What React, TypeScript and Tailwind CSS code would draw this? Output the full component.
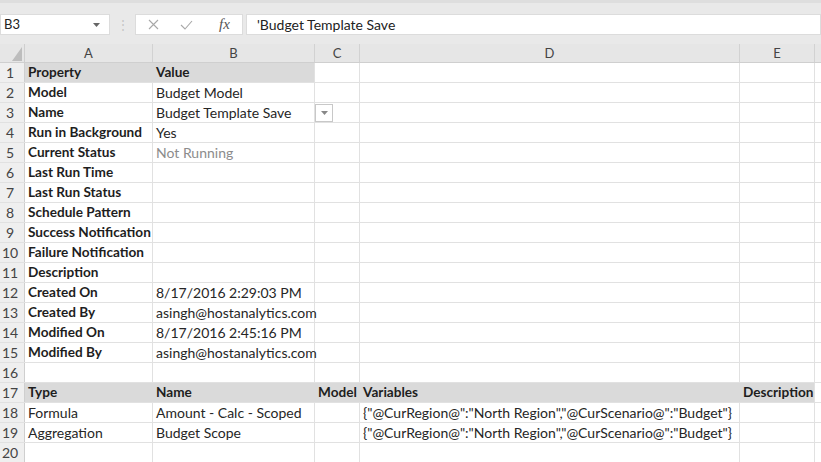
import { ReactNode } from "react";

/**
 * Excel-style sheet view: formula bar, column headers and a property list
 */

type Cell = { text?: string; bold?: boolean; muted?: boolean };
type Row = { cells: Cell[]; fill?: number; dropdown?: boolean };

const VARS = '{"@CurRegion@":"North Region","@CurScenario@":"Budget"}';

const b = (text: string): Cell => ({ text, bold: true });
const t = (text: string): Cell => ({ text });

const rows: Row[] = [
  { cells: [b("Property"), b("Value")], fill: 2 },
  { cells: [b("Model"), t("Budget Model")] },
  { cells: [b("Name"), t("Budget Template Save")], dropdown: true },
  { cells: [b("Run in Background"), t("Yes")] },
  { cells: [b("Current Status"), { text: "Not Running", muted: true }] },
  { cells: [b("Last Run Time")] },
  { cells: [b("Last Run Status")] },
  { cells: [b("Schedule Pattern")] },
  { cells: [b("Success Notification")] },
  { cells: [b("Failure Notification")] },
  { cells: [b("Description")] },
  { cells: [b("Created On"), t("8/17/2016 2:29:03 PM")] },
  { cells: [b("Created By"), t("asingh@hostanalytics.com")] },
  { cells: [b("Modified On"), t("8/17/2016 2:45:16 PM")] },
  { cells: [b("Modified By"), t("asingh@hostanalytics.com")] },
  { cells: [] },
  { cells: [b("Type"), b("Name"), b("Model"), b("Variables"), b("Description")], fill: 5 },
  { cells: [t("Formula"), t("Amount - Calc - Scoped"), t(""), t(VARS)] },
  { cells: [t("Aggregation"), t("Budget Scope"), t(""), t(VARS)] },
  { cells: [] },
];

const widths = ["w-[128px]", "w-[162px]", "w-[45px]", "w-[380px]", "w-[75px]"];
const headers = ["A", "B", "C", "D", "E"];

function GridCell({ cell, width, filled, lastFilled, children }: { cell?: Cell; width: string; filled: boolean; lastFilled: boolean; children?: ReactNode }) {
  const border = filled && !lastFilled ? "border-[#dadada]" : "border-[#e1e1e1]";
  let color = "text-[#262626]";
  if (cell?.bold) color = "font-bold text-[#1e1e1e] text-[13.6px]";
  if (cell?.muted) color = "text-[#8c8c8c]";
  return (
    <div
      className={`${width} shrink-0 h-full relative border-r ${border} ${filled ? "bg-[#dadada]" : ""} flex items-center pl-[3px] whitespace-nowrap`}
    >
      {cell?.text && <span className={color}>{cell.text}</span>}
      {children}
    </div>
  );
}

export default function App() {
  return (
    <div
      className="w-[821px] h-[462px] overflow-hidden bg-white text-[14px] leading-none"
      style={{ fontFamily: "Lato, 'Open Sans', sans-serif" }}
    >
      {/* formula bar */}
      <div className="bg-[#e9e9e9] pt-[11px] pb-[9px] border-t-[3px] border-[#dedede]">
        <div className="flex items-stretch h-[21px]">
          <div className="w-[110px] bg-white border border-[#dcdcdc] flex items-center justify-between pl-[3px] pr-[9px]">
            <span className="text-[13px] text-[#222]">B3</span>
            <svg width="7" height="4" viewBox="0 0 7 4">
              <path d="M0 0h7L3.5 4z" fill="#666" />
            </svg>
          </div>
          <div className="w-[25px] flex items-center justify-center text-[#c4c4c4] text-[12px]">⋮</div>
          <div className="w-[108px] bg-white border border-[#dcdcdc] flex items-center pl-[12px]">
            <svg width="11" height="11" viewBox="0 0 11 11">
              <path d="M1 1l9 9M10 1l-9 9" stroke="#a8a8a8" strokeWidth="1.1" />
            </svg>
            <svg width="13" height="10" viewBox="0 0 13 10" className="ml-[21px]">
              <path d="M1 5l4 4 7-8" stroke="#a8a8a8" strokeWidth="1.1" fill="none" />
            </svg>
            <span className="ml-[26px] italic text-[15px] text-[#555]" style={{ fontFamily: "'Liberation Serif', serif" }}>
              fx
            </span>
          </div>
          <div className="flex-1 ml-[3px] bg-white border border-[#dcdcdc] flex items-center pl-[10px]">
            <span className="text-[14px] text-[#222]">'Budget Template Save</span>
          </div>
        </div>
      </div>

      {/* column headers */}
      <div className="flex h-[19px] bg-[#e6e6e6] border-b border-[#cfcfcf]">
        <div className="w-[25px] shrink-0 border-r border-[#cfcfcf] flex items-end justify-end pr-[2px] pb-[1px]">
          <svg width="10" height="14" viewBox="0 0 10 14">
            <path d="M10 0v14H0z" fill="#bdbdbd" />
          </svg>
        </div>
        {headers.map((h, i) => (
          <div key={h} className={`${widths[i]} shrink-0 border-r border-[#d2d2d2] flex items-center justify-center text-[13px] text-[#444]`}>
            {h}
          </div>
        ))}
        <div className="flex-1" />
      </div>

      {/* rows */}
      {rows.map((row, r) => (
        <div key={r} className="flex h-[20px] border-b border-[#e1e1e1]">
          <div className="w-[25px] shrink-0 bg-[#efefef] border-r border-[#cfcfcf] flex items-center justify-center pr-[4px] text-[14px] text-[#444]">
            {r + 1}
          </div>
          {widths.map((w, c) => {
            const filled = !!row.fill && c < row.fill;
            return (
              <GridCell key={c} cell={row.cells[c]} width={w} filled={filled} lastFilled={!!row.fill && c === row.fill - 1}>
                {row.dropdown && c === 2 && (
                  <div className="w-[18px] h-[18px] border border-[#c8c8c8] bg-white flex items-center justify-center -ml-[3px]">
                    <svg width="7" height="4" viewBox="0 0 7 4">
                      <path d="M0 0h7L3.5 4z" fill="#888" />
                    </svg>
                  </div>
                )}
              </GridCell>
            );
          })}
          <div className="flex-1" />
        </div>
      ))}
    </div>
  );
}
